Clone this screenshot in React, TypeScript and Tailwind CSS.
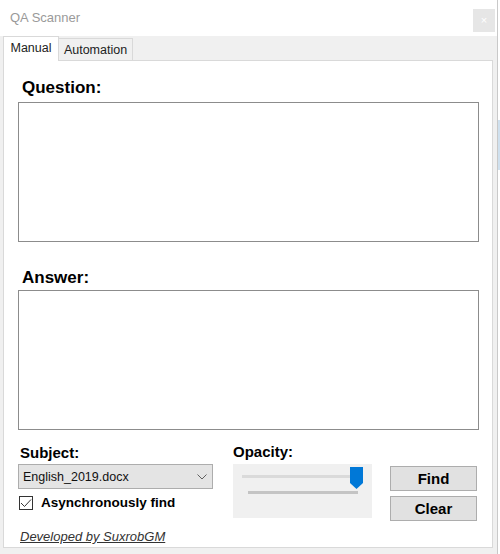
import { useState } from "react";

function Thumb() {
  return (
    <svg width="13" height="22" viewBox="0 0 13 22" className="absolute left-[117px] top-[3px]">
      <path d="M0 0 H13 V16 L6.5 22 L0 16 Z" fill="#0078d7" />
    </svg>
  );
}

function Chevron() {
  return (
    <svg width="10" height="6" viewBox="0 0 10 6" className="mr-[5px]">
      <path d="M0.5 0.5 L5 5 L9.5 0.5" fill="none" stroke="#606060" strokeWidth="1" />
    </svg>
  );
}

export default function App() {
  const [tab, setTab] = useState<"manual" | "automation">("manual");
  const [async, setAsync] = useState(true);

  return (
    <div className="w-[500px] h-[554px] bg-white flex font-['Liberation_Sans',Arial,sans-serif] text-black overflow-hidden">
      <div className="w-[498px] h-full flex flex-col border-r border-[#c9c9c9]">
        {/* title bar */}
        <div className="h-[36px] flex items-start justify-between pl-[10px] pr-[2px] shrink-0">
          <span className="mt-[10px] text-[13px] leading-[16px] text-[#9a9a9a]">QA Scanner</span>
          <div className="mt-[9px] w-[22px] h-[23px] bg-[#e6e6e6] flex items-center justify-center text-[11px] text-white">
            ×
          </div>
        </div>

        {/* tab area */}
        <div className="flex-1 bg-[#f0f0f0] flex flex-col pl-[3px] pr-[4px]">
          <div className="h-[24px] flex items-end shrink-0 relative">
            <button
              onClick={() => setTab("manual")}
              className="h-[25px] w-[56px] bg-white border border-b-0 border-[#d9d9d9] text-[12.5px] leading-[16px] text-[#222] pb-[2px] relative z-10 -mb-px"
            >
              Manual
            </button>
            <button
              onClick={() => setTab("automation")}
              className="h-[22px] w-[74px] bg-[#f0f0f0] border border-l-0 border-b-0 border-[#d9d9d9] text-[12.5px] leading-[16px] text-[#222]"
            >
              Automation
            </button>
          </div>

          <div className="h-[488px] bg-white border border-[#d9d9d9] pl-[14px] pr-[13px] pt-[16px] flex flex-col">
            {tab === "manual" && (
              <>
                <div className="pl-[4px] h-[21px] text-[17px] leading-[21px] font-bold">Question:</div>
                <div className="mt-[4px] h-[140px] w-[461px] border border-[#8c8c8c] bg-white" />
                <div className="mt-[25px] pl-[4px] h-[21px] text-[17px] leading-[21px] font-bold">Answer:</div>
                <div className="mt-[2px] h-[140px] w-[461px] border border-[#8c8c8c] bg-white" />

                <div className="mt-[13px] flex">
                  {/* subject column */}
                  <div className="w-[195px] flex flex-col">
                    <div className="pl-[2px] h-[19px] text-[15px] leading-[19px] font-bold">Subject:</div>
                    <div className="mt-[2px] h-[25px] bg-[#e4e4e4] border border-[#adadad] flex items-center justify-between pl-[4px]">
                      <span className="text-[12.5px] leading-[16px] text-[#111]">English_2019.docx</span>
                      <Chevron />
                    </div>
                    <label className="mt-[6px] h-[16px] flex items-center pl-[1px] cursor-pointer">
                      <span
                        onClick={() => setAsync(!async)}
                        className="w-[14px] h-[14px] border border-[#333] bg-white flex items-center justify-center"
                      >
                        {async && (
                          <svg width="12" height="10" viewBox="0 0 12 10">
                            <path d="M1 5 L4.5 8.5 L11 1.5" fill="none" stroke="#333" strokeWidth="1" />
                          </svg>
                        )}
                      </span>
                      <span className="ml-[8px] text-[13.5px] leading-[16px] font-bold">Asynchronously find</span>
                    </label>
                    <div className="mt-[18px] pl-[2px] text-[13px] leading-[16px] italic underline text-[#333]">
                      Developed by SuxrobGM
                    </div>
                  </div>

                  {/* opacity column */}
                  <div className="ml-[20px] w-[139px] flex flex-col">
                    <div className="h-[18px] text-[15px] leading-[18px] font-bold">Opacity:</div>
                    <div className="mt-[3px] h-[54px] bg-[#f0f0f0] relative pt-[11px] pl-[9px]">
                      <div className="h-[3px] w-[114px] bg-[#dadada]" />
                      <div className="mt-[13px] ml-[6px] h-[3px] w-[110px] bg-[#c4c4c4]" />
                      <Thumb />
                    </div>
                  </div>

                  {/* buttons */}
                  <div className="ml-[18px] w-[87px] flex flex-col pt-[23px] gap-[5px]">
                    <button className="h-[25px] bg-[#e1e1e1] border border-[#adadad] text-[15px] leading-[18px] font-bold">
                      Find
                    </button>
                    <button className="h-[25px] bg-[#e1e1e1] border border-[#adadad] text-[15px] leading-[18px] font-bold">
                      Clear
                    </button>
                  </div>
                </div>
              </>
            )}
          </div>
        </div>
      </div>
      <div className="flex-1 flex flex-col">
        <div className="h-[120px]" />
        <div className="h-[50px] bg-[#cfe0ee]" />
      </div>
    </div>
  );
}
